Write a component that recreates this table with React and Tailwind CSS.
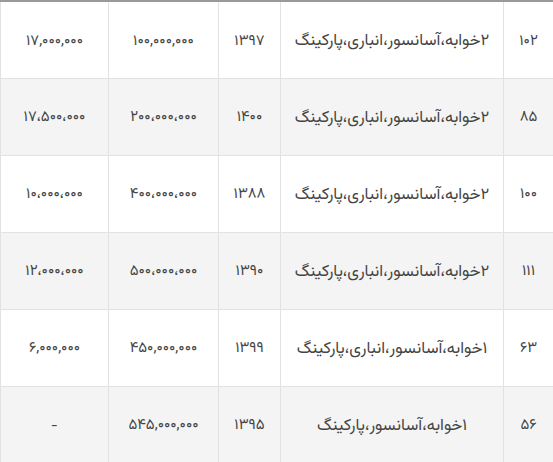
import React from "react";

const rows = [
  ["۱۰۲", "۲خوابه،آسانسور،انباری،پارکینگ", "۱۳۹۷", "۱۰۰,۰۰۰,۰۰۰", "۱۷,۰۰۰,۰۰۰"],
  ["۸۵", "۲خوابه،آسانسور،انباری،پارکینگ", "۱۴۰۰", "۲۰۰،۰۰۰،۰۰۰", "۱۷،۵۰۰،۰۰۰"],
  ["۱۰۰", "۲خوابه،آسانسور،انباری،پارکینگ", "۱۳۸۸", "۴۰۰،۰۰۰،۰۰۰", "۱۰،۰۰۰،۰۰۰"],
  ["۱۱۱", "۲خوابه،آسانسور،انباری،پارکینگ", "۱۳۹۰", "۵۰۰،۰۰۰،۰۰۰", "۱۲،۰۰۰،۰۰۰"],
  ["۶۳", "۱خوابه،آسانسور،انباری،پارکینگ", "۱۳۹۹", "۴۵۰,۰۰۰,۰۰۰", "۶,۰۰۰,۰۰۰"],
  ["۵۶", "۱خوابه،آسانسور،پارکینگ", "۱۳۹۵", "۵۴۵,۰۰۰,۰۰۰", "-"],
];

export default function App() {
  return (
    <div className="w-[553px] h-[462px] overflow-hidden bg-white">
      <table
        dir="rtl"
        className="w-[553px] table-fixed border-collapse border-t-2 border-t-[#9a9a9a] text-[#444]"
        style={{ fontFamily: '"Vazirmatn", "Noto Sans Arabic", "DejaVu Sans", sans-serif' }}
      >
        <colgroup>
          <col className="w-[50px]" />
          <col className="w-[223px]" />
          <col className="w-[62px]" />
          <col className="w-[110px]" />
          <col className="w-[108px]" />
        </colgroup>
        <tbody>
          {rows.map((r, i) => (
            <tr key={i} className={i % 2 === 1 ? "bg-[#f4f4f4]" : "bg-white"}>
              {r.map((c, j) => (
                <td
                  key={j}
                  className={`h-[77px] border border-[#e2e2e2] text-center align-middle px-1 pt-1 ${
                    j === 1 ? "text-[16.5px]" : "text-[15px] tracking-[0.4px]"
                  }`}
                >
                  {c}
                </td>
              ))}
            </tr>
          ))}
        </tbody>
      </table>
    </div>
  );
}
